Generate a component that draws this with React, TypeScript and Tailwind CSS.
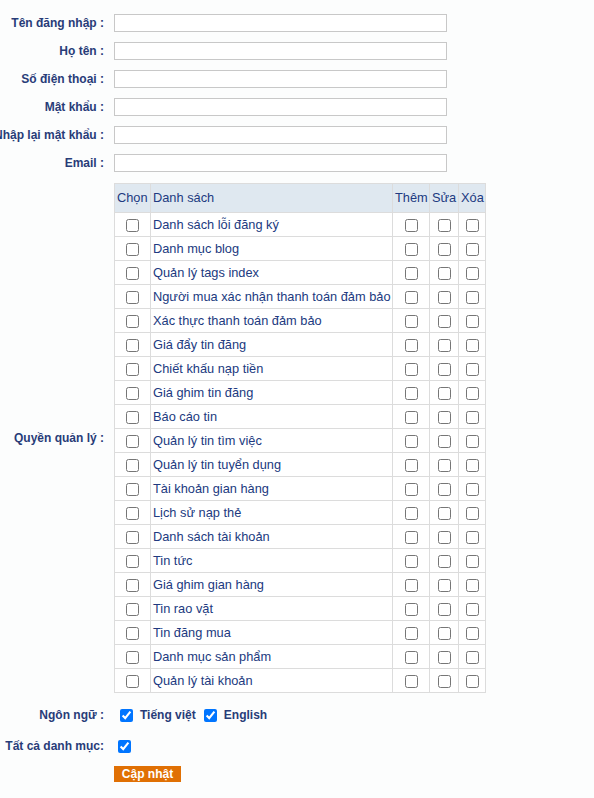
import React from "react";

const items = [
  "Danh sách lỗi đăng ký",
  "Danh mục blog",
  "Quản lý tags index",
  "Người mua xác nhận thanh toán đảm bảo",
  "Xác thực thanh toán đảm bảo",
  "Giá đẩy tin đăng",
  "Chiết khấu nạp tiền",
  "Giá ghim tin đăng",
  "Báo cáo tin",
  "Quản lý tin tìm việc",
  "Quản lý tin tuyển dụng",
  "Tài khoản gian hàng",
  "Lịch sử nạp thẻ",
  "Danh sách tài khoản",
  "Tin tức",
  "Giá ghim gian hàng",
  "Tin rao vặt",
  "Tin đăng mua",
  "Danh mục sản phẩm",
  "Quản lý tài khoản",
];

const fields = ["Tên đăng nhập :", "Họ tên :", "Số điện thoại :", "Mật khẩu :", "Nhập lại mật khẩu :", "Email :"];

function Label({ children, className = "" }: { children: React.ReactNode; className?: string }) {
  return (
    <div className={"w-[104px] shrink-0 flex justify-end whitespace-nowrap font-bold text-[#283c78] " + className}>
      <span>{children}</span>
    </div>
  );
}

function Cb({ checked = false }: { checked?: boolean }) {
  return <input type="checkbox" defaultChecked={checked} className="w-[13px] h-[13px] m-0 align-middle" />;
}

export default function App() {
  return (
    <div
      className="min-h-[798px] w-[594px] bg-[#fcfdfd] text-[12px] text-[#283c78] overflow-hidden"
      style={{ fontFamily: '"Liberation Sans", Arial, sans-serif' }}
    >
      <div className="flex flex-col gap-[10px] pt-[14px]">
        {fields.map((f) => (
          <div key={f} className="flex items-center gap-[10px] h-[18px]">
            <Label>{f}</Label>
            <input type="text" className="w-[333px] h-[18px] border border-[#c8c8c8] bg-white outline-none" />
          </div>
        ))}
      </div>

      <div className="flex items-center gap-[10px] mt-[11px]">
        <Label>Quyền quản lý :</Label>
        <table className="border-collapse table-fixed w-[371px] text-[12.8px] text-[#213a80]">
          <colgroup>
            <col className="w-[36px]" />
            <col className="w-[242px]" />
            <col className="w-[37px]" />
            <col className="w-[29px]" />
            <col className="w-[27px]" />
          </colgroup>
          <thead>
            <tr className="bg-[#dfe8f0] h-[29px]">
              <th className="border border-[#dcdcdc] px-[2px] font-normal text-left whitespace-nowrap">Chọn</th>
              <th className="border border-[#dcdcdc] px-[2px] font-normal text-left whitespace-nowrap">Danh sách</th>
              <th className="border border-[#dcdcdc] px-[2px] font-normal text-left whitespace-nowrap">Thêm</th>
              <th className="border border-[#dcdcdc] px-[2px] font-normal text-left whitespace-nowrap">Sửa</th>
              <th className="border border-[#dcdcdc] px-[2px] font-normal text-left whitespace-nowrap">Xóa</th>
            </tr>
          </thead>
          <tbody>
            {items.map((it) => (
              <tr key={it} className="h-[24px] bg-white">
                <td className="border border-[#dcdcdc] text-center p-0"><Cb /></td>
                <td className="border border-[#dcdcdc] px-[2px] py-0 whitespace-nowrap">{it}</td>
                <td className="border border-[#dcdcdc] text-center p-0"><Cb /></td>
                <td className="border border-[#dcdcdc] text-center p-0"><Cb /></td>
                <td className="border border-[#dcdcdc] text-center p-0"><Cb /></td>
              </tr>
            ))}
          </tbody>
        </table>
      </div>

      <div className="flex items-center gap-[10px] mt-[15px] h-[14px]">
        <Label>Ngôn ngữ :</Label>
        <div className="flex items-center">
          <span className="ml-[6px]"><Cb checked /></span>
          <span className="ml-[7px] font-bold">Tiếng việt</span>
          <span className="ml-[8px]"><Cb checked /></span>
          <span className="ml-[7px] font-bold">English</span>
        </div>
      </div>

      <div className="flex items-center gap-[10px] mt-[17px] h-[14px]">
        <Label>Tất cả danh mục:</Label>
        <span className="ml-[4px]"><Cb checked /></span>
      </div>

      <div className="flex mt-[13px]">
        <div className="w-[114px] shrink-0" />
        <button className="w-[67px] h-[16px] bg-[#e07004] text-white font-bold text-[12px] leading-[16px]">
          Cập nhật
        </button>
      </div>
    </div>
  );
}
